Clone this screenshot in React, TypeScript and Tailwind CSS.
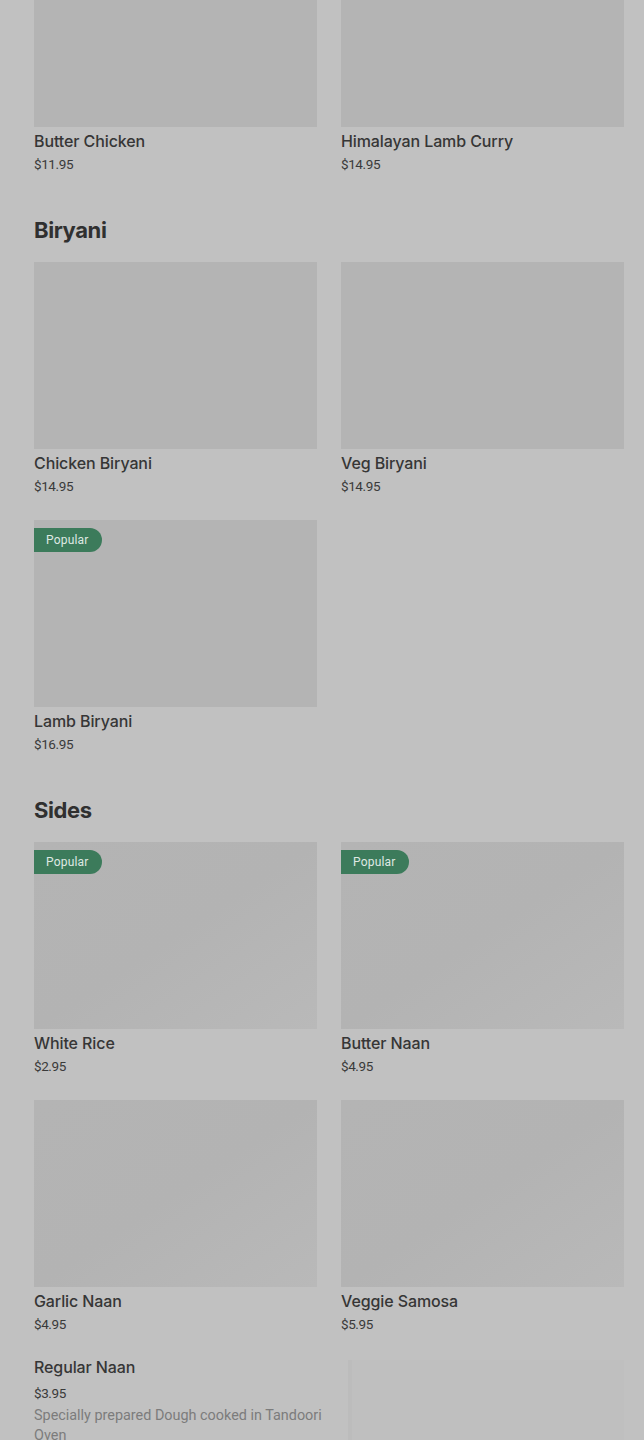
import React from "react";

type Item = {
  name: string;
  price: string;
  popular?: boolean;
  shimmer?: boolean;
};

const sections: { title?: string; items: Item[]; clipTop?: boolean }[] = [
  {
    clipTop: true,
    items: [
      { name: "Butter Chicken", price: "$11.95" },
      { name: "Himalayan Lamb Curry", price: "$14.95" },
    ],
  },
  {
    title: "Biryani",
    items: [
      { name: "Chicken Biryani", price: "$14.95" },
      { name: "Veg Biryani", price: "$14.95" },
      { name: "Lamb Biryani", price: "$16.95", popular: true },
    ],
  },
  {
    title: "Sides",
    items: [
      { name: "White Rice", price: "$2.95", popular: true, shimmer: true },
      { name: "Butter Naan", price: "$4.95", popular: true, shimmer: true },
      { name: "Garlic Naan", price: "$4.95", shimmer: true },
      { name: "Veggie Samosa", price: "$5.95", shimmer: true },
    ],
  },
];

const nameCls =
  "font-['Inter','Liberation_Sans',sans-serif] text-[16px] font-medium leading-6 tracking-[-0.1px] text-[#363636]";
const priceCls =
  "font-['Roboto','Liberation_Sans',sans-serif] text-[13.5px] leading-5 tracking-[-0.4px] text-[#3a3a3a]";

const MenuCard = ({ item }: { item: Item }) => (
  <div className="flex flex-col">
    <div
      className={
        item.shimmer
          ? "relative h-[187px] bg-linear-to-br from-[#b4b4b4] via-[#b3b3b3] to-[#b9b9b9]"
          : "relative h-[187px] bg-[#b4b4b4]"
      }
    >
      {item.popular && (
        <span className="absolute left-0 top-2 flex h-6 items-center rounded-r-full bg-[#3c7b5b] pl-3 pr-[13px] font-['Roboto',sans-serif] text-[12px] tracking-[0.2px] text-[#dfe8e3]">
          Popular
        </span>
      )}
    </div>
    <div className="pt-[2px]">
      <p className={nameCls}>{item.name}</p>
      <p className={`mt-[1px] ${priceCls}`}>{item.price}</p>
    </div>
  </div>
);

export default function App() {
  return (
    <div className="min-h-[1440px] overflow-hidden bg-[#c1c1c1] pl-[34px] pr-5 font-['Roboto','Liberation_Sans',sans-serif]">
      {sections.map((section, i) => (
        <section key={i} className={section.clipTop ? "-mt-[60px]" : "pt-[42px]"}>
          {section.title && (
            <h2 className="mb-[18px] font-['Inter','Liberation_Sans',sans-serif] text-[22px] font-bold leading-7 tracking-[-0.4px] text-[#303030]">
              {section.title}
            </h2>
          )}
          <div className="grid grid-cols-2 gap-x-6 gap-y-[24px]">
            {section.items.map((item) => (
              <MenuCard key={item.name} item={item} />
            ))}
          </div>
        </section>
      ))}

      <div className="mt-[21px] flex gap-5">
        <div className="flex-1">
          <p className={nameCls}>Regular Naan</p>
          <p className={`mt-1 ${priceCls}`}>$3.95</p>
          <p className="mt-[3px] text-[14.4px] leading-5 text-[#7c7c7c]">
            Specially prepared Dough cooked in Tandoori Oven
          </p>
        </div>
        <div className="mt-[5px] h-[187px] w-[276px] border-l-4 border-[#bcbcbc] bg-[#bfbfbf]" />
      </div>
    </div>
  );
}
